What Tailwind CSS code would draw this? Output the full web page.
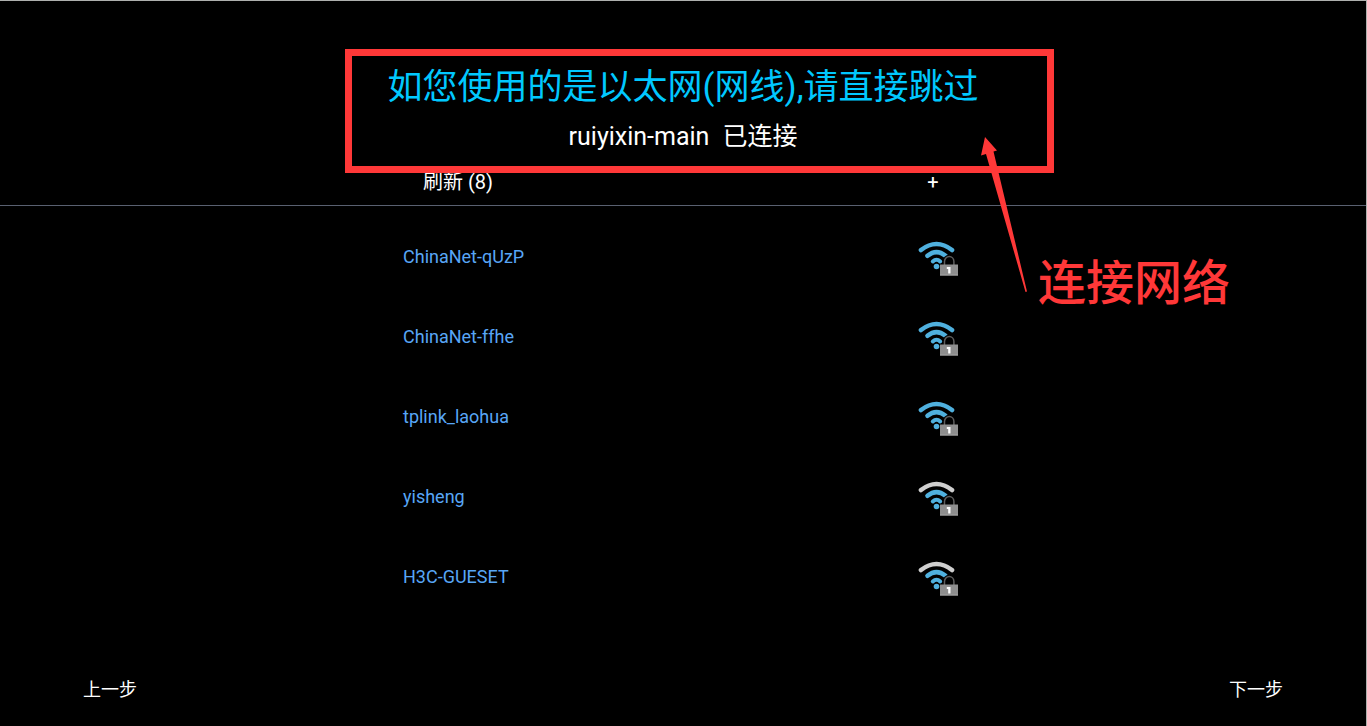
<!DOCTYPE html>
<html lang="zh-CN">
<head>
<meta charset="utf-8">
<meta name="viewport" content="width=device-width, initial-scale=1">
<title>连接网络</title>
<script src="https://cdn.jsdelivr.net/npm/@tailwindcss/browser@4"></script>
</head>
<body class="relative flex min-h-screen flex-col overflow-x-hidden border-t border-r border-[#aeb0ae] bg-black font-['Roboto','Noto_Sans_CJK_SC',sans-serif] text-white">
  <svg class="hidden" aria-hidden="true">
    <symbol id="wifi" viewBox="0 0 40 40">
      <g fill="none" stroke-width="4.600" stroke-linecap="round">
        <path d="M3 13Q18.500 1 34 13" stroke="currentColor"/>
        <path d="M9.500 18.800Q18.500 11.500 27.500 18.800" stroke="#4fb0de"/>
        <path d="M14.800 24.500Q18.500 21 22.200 24.500" stroke="#4fb0de" stroke-width="4"/>
      </g>
      <circle cx="18.500" cy="29.500" r="2.800" fill="#4fb0de"/>
      <path d="M26.500 28v-3.500a4.700 5 0 0 1 9.400 0V28" fill="none" stroke="#000" stroke-width="3.500"/>
      <path d="M26.500 28v-3.500a4.700 5 0 0 1 9.400 0V28" fill="none" stroke="#5c5c5c" stroke-width="1.500"/>
      <path d="M22 27.500h18v11H22z" fill="#8e8e8e"/>
      <path d="M22 37.500h18v1H22z" fill="#a5a5a5"/>
      <path d="M28.800 30h3.700v6.500h-2.300v-4.500h-1.400z" fill="#fff"/>
    </symbol>
  </svg>

  <header class="flex flex-col items-center border-b border-[#596070] pt-[62px]">
    <h1 class="text-[35px] leading-[50px] whitespace-nowrap text-[#00c8ff]">如您使用的是以太网(网线),请直接跳过</h1>
    <p class="mt-[6px] flex gap-[13px] text-[25px] leading-9"><span>ruiyixin-main</span><span>已连接</span></p>
    <div class="mt-3 flex w-[560px] items-center justify-between px-5 pb-2 text-xl leading-[30px]">
      <button type="button">刷新 (8)</button>
      <button type="button" aria-label="添加网络" class="w-5 text-center">+</button>
    </div>
  </header>

  <main class="flex grow flex-col items-center pt-[11px]">
    <ul class="w-[560px] text-lg text-[#58a6f6]">
      <li><button type="button" class="flex h-20 w-full items-center justify-between pr-[5px]"><span>ChinaNet-qUzP</span><svg class="size-10 text-[#4fb0de]" aria-hidden="true"><use href="#wifi"/></svg></button></li>
      <li><button type="button" class="flex h-20 w-full items-center justify-between pr-[5px]"><span>ChinaNet-ffhe</span><svg class="size-10 text-[#4fb0de]" aria-hidden="true"><use href="#wifi"/></svg></button></li>
      <li><button type="button" class="flex h-20 w-full items-center justify-between pr-[5px]"><span>tplink_laohua</span><svg class="size-10 text-[#4fb0de]" aria-hidden="true"><use href="#wifi"/></svg></button></li>
      <li><button type="button" class="flex h-20 w-full items-center justify-between pr-[5px]"><span>yisheng</span><svg class="size-10 text-[#cfcfcf]" aria-hidden="true"><use href="#wifi"/></svg></button></li>
      <li><button type="button" class="flex h-20 w-full items-center justify-between pr-[5px]"><span>H3C-GUESET</span><svg class="size-10 text-[#cfcfcf]" aria-hidden="true"><use href="#wifi"/></svg></button></li>
    </ul>
  </main>

  <footer class="flex justify-between px-[83px] pb-[22px] text-lg">
    <button type="button">上一步</button>
    <button type="button">下一步</button>
  </footer>

  <!-- Annotation layer: frame, arrow and caption over the page -->
  <div class="pointer-events-none absolute top-12 left-1/2 -ml-[338px] text-[#ff3838]">
    <div class="h-[124px] w-[709px] border-[7px] border-current"></div>
    <svg class="absolute top-[88px] left-[634px] h-[156px] w-[50px]" viewBox="0 0 50 156" fill="currentColor" aria-hidden="true">
      <path d="M6 0L18 13.500L14.500 14.500L48 154.500L46.500 155L7 17L2 18.500Z"/>
    </svg>
    <strong class="absolute top-[200px] left-[693px] text-5xl leading-[70px] font-medium whitespace-nowrap">连接网络</strong>
  </div>
</body>
</html>
